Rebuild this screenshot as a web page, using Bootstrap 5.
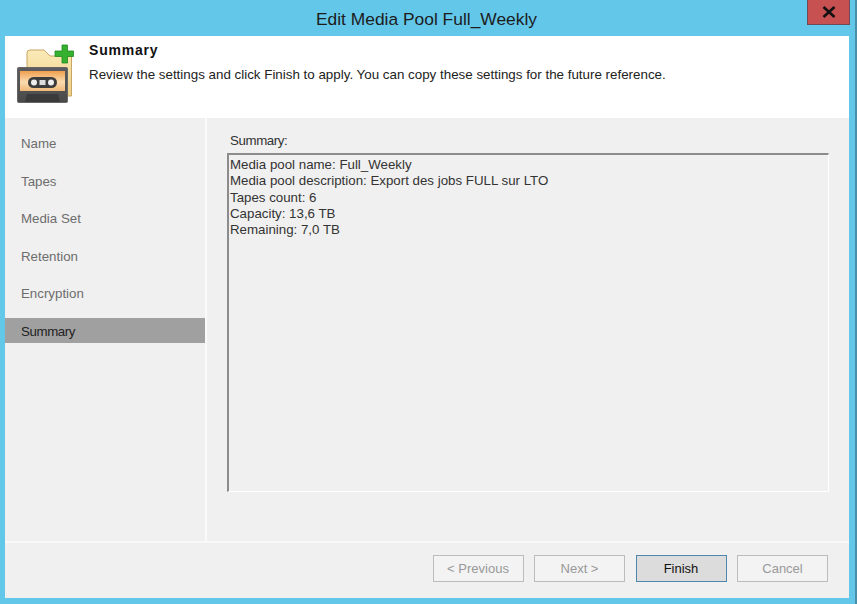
<!DOCTYPE html>
<html lang="en">
<head>
<meta charset="utf-8">
<title>Edit Media Pool Full_Weekly</title>
<link rel="stylesheet" href="https://cdn.jsdelivr.net/npm/bootstrap@5.3.0/dist/css/bootstrap.min.css">
<style>
html,body{height:100%;margin:0;overflow:hidden}
body{font-family:"Liberation Sans",Arial,sans-serif;font-size:13.3px;color:#333;background:#63c7ea}
.win{width:857px;height:604px;position:relative;border-right:2px solid #4a8fa8}
.titlebar{height:36px;padding:9px 2px 0 0;font-size:17.4px;line-height:21px;color:#1c1c1c;text-align:center}
.closebtn{position:absolute;left:807px;top:0;width:43px;height:25px;background:#c75050;border:1px solid #6e4a55;border-top:0;display:flex;align-items:center;justify-content:center}
.pane{margin-left:5px;width:844px;height:562px;background:#f0f0f0}
.head{height:82px;background:#fff;padding:5px 0 0 84px;position:relative}
.head-title{font-weight:700;font-size:14px;letter-spacing:.8px;line-height:18px;color:#111}
.head-sub{font-size:13.37px;line-height:18px;margin-top:7px;color:#222}
.head-icon{position:absolute;left:12px;top:8px;filter:blur(.4px)}
.mid{height:423px}
.side{width:200px;flex:none;padding-top:12px}
.side-item{height:25px;margin-bottom:12.5px;line-height:27px;padding-left:16px;color:#6d6d6d}
.side-item.on{background:#a0a0a0;color:#222;letter-spacing:-.4px}
.vsep{width:2px;flex:none;background:#fafafa}
.main{padding:14px 20px 0 23px;flex:1}
.lab{line-height:18px;color:#333;letter-spacing:-.4px}
.box{height:339px;margin-top:3px;margin-left:-3px;border-top:2px solid #8c8c8c;border-left:2px solid #8c8c8c;border-right:1px solid #fff;border-bottom:1px solid #fff;padding:2px 0 0 1px;line-height:16.3px;color:#333}
.foot{height:57px;border-top:2px solid #f9f9f9;padding:12px 21px 0 0;gap:10.5px}
.wbtn{width:91px;height:27px;padding:0;border:1px solid #bcbcbc;border-radius:0;background:#f3f3f3;color:#999;font-size:13px;line-height:25px}
.wbtn:disabled{border-color:#bcbcbc;background:#f3f3f3;color:#999;opacity:1}
.wbtn.pri,.wbtn.pri:hover{background:#dcdcdc;border-color:#4f87ad;color:#111}
</style>
</head>
<body>
<div class="win">
  <div class="titlebar">Edit Media Pool Full_Weekly</div>
  <div class="closebtn">
    <svg width="14" height="12" viewBox="0 0 14 12"><path d="M1.5 1 L12.5 11 M12.5 1 L1.5 11" stroke="#111" stroke-width="2.6" fill="none"/></svg>
  </div>
  <div class="pane">
    <div class="head">
      <svg class="head-icon" width="60" height="62" viewBox="0 0 60 62">
        <defs>
          <linearGradient id="fo" x1="0" y1="0" x2="0" y2="1"><stop offset="0" stop-color="#fbeab8"/><stop offset="1" stop-color="#eccd84"/></linearGradient>
          <linearGradient id="ta" x1="0" y1="0" x2="0" y2="1"><stop offset="0" stop-color="#ef9f4e"/><stop offset=".55" stop-color="#fbdcb0"/><stop offset="1" stop-color="#f0b878"/></linearGradient>
          <linearGradient id="ca" x1="0" y1="0" x2="0" y2="1"><stop offset="0" stop-color="#5c5c60"/><stop offset="1" stop-color="#4a4a4a"/></linearGradient>
        </defs>
        <path d="M10 9 Q10 6 13 6 H27 L33 12 H54.500 V52 H10 Z" fill="url(#fo)" stroke="#c9a663"/>
        <path d="M45 1 h5.500 v6 h6 v5.500 h-6 v6.500 h-5.500 v-6.500 h-7 v-5.500 h7 Z" fill="#35b12f" stroke="#1f8c20" stroke-width=".8"/>
        <rect x="0.500" y="23.500" width="50" height="35" rx="1" fill="url(#ca)" stroke="#666"/>
        <rect x="3" y="27" width="45" height="20" fill="url(#ta)"/>
        <rect x="11" y="33" width="29" height="11" rx="5.500" fill="#3c3c3c"/>
        <circle cx="17" cy="38.500" r="3" fill="#eee"/><circle cx="34" cy="38.500" r="3" fill="#eee"/>
        <rect x="22.500" y="36" width="6" height="5" fill="#ddd"/>
        <path d="M8 58 L10 50 H41 L43 58 Z" fill="#3a3a3a"/>
      </svg>
      <div class="head-title">Summary</div>
      <div class="head-sub">Review the settings and click Finish to apply. You can copy these settings for the future reference.</div>
    </div>
    <div class="mid d-flex">
      <div class="side">
        <div class="side-item">Name</div>
        <div class="side-item">Tapes</div>
        <div class="side-item">Media Set</div>
        <div class="side-item">Retention</div>
        <div class="side-item">Encryption</div>
        <div class="side-item on">Summary</div>
      </div>
      <div class="vsep"></div>
      <div class="main">
        <div class="lab">Summary:</div>
        <div class="box">Media pool name: Full_Weekly<br>Media pool description: Export des jobs FULL sur LTO<br>Tapes count: 6<br>Capacity: 13,6 TB<br>Remaining: 7,0 TB</div>
      </div>
    </div>
    <div class="foot d-flex justify-content-end">
      <button class="btn wbtn" disabled>&lt; Previous</button>
      <button class="btn wbtn" disabled>Next &gt;</button>
      <button class="btn wbtn pri">Finish</button>
      <button class="btn wbtn" disabled>Cancel</button>
    </div>
  </div>
</div>
<script src="https://cdn.jsdelivr.net/npm/bootstrap@5.3.0/dist/js/bootstrap.bundle.min.js"></script>
</body>
</html>
